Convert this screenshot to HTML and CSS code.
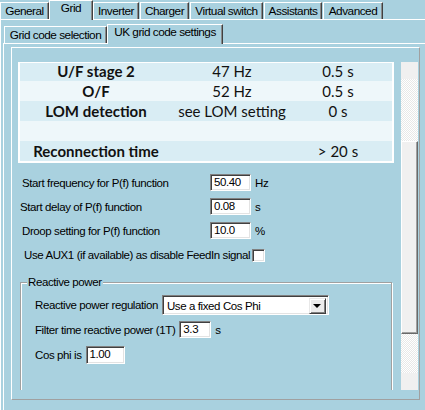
FILE: index.html
```html
<!DOCTYPE html>
<html>
<head>
<meta charset="utf-8">
<link rel="stylesheet" href="styles.css">
</head>
<body>
<div class="window">
  <div class="tabs1">
    <div class="tab t-general">General</div>
    <div class="tab sel t-grid">Grid</div>
    <div class="tab t-inverter">Inverter</div>
    <div class="tab t-charger">Charger</div>
    <div class="tab t-virtual">Virtual switch</div>
    <div class="tab t-assist">Assistants</div>
    <div class="tab t-adv">Advanced</div>
  </div>
  <div class="panel1">
    <div class="tabs2">
      <div class="tab t-gcs">Grid code selection</div>
      <div class="tab sel t-uk">UK grid code settings</div>
    </div>
    <div class="panel2">
      <div class="inner">
        <div class="scroller">
          <div class="content">
            <div class="table">
              <div class="row dark first"><span class="c1">U/F stage 2</span><span class="c2">47 Hz</span><span class="c3">0.5 s</span></div>
              <div class="row light"><span class="c1">O/F</span><span class="c2">52 Hz</span><span class="c3">0.5 s</span></div>
              <div class="row dark"><span class="c1">LOM detection</span><span class="c2">see LOM setting</span><span class="c3">0 s</span></div>
              <div class="row light"><span class="c1"></span><span class="c2"></span><span class="c3"></span></div>
              <div class="row dark"><span class="c1">Reconnection time</span><span class="c2"></span><span class="c3">&gt; 20 s</span></div>
            </div>
            <div class="form">
              <div class="frow"><span class="flabel">Start frequency for P(f) function</span><span class="field w41">50.40</span><span class="unit">Hz</span></div>
              <div class="frow"><span class="flabel alt">Start delay of P(f) function</span><span class="field w41">0.08</span><span class="unit">s</span></div>
              <div class="frow"><span class="flabel">Droop setting for P(f) function</span><span class="field w41">10.0</span><span class="unit">%</span></div>
              <div class="crow"><span class="clabel">Use AUX1 (if available) as disable FeedIn signal</span><span class="check"></span></div>
            </div>
            <div class="group">
              <span class="legend">Reactive power</span>
              <div class="grow r1"><span class="glabel">Reactive power regulation</span><span class="select"><span class="seltext">Use a fixed Cos Phi</span><span class="selbtn"><span class="tri"></span></span></span></div>
              <div class="grow r2"><span class="glabel">Filter time reactive power (1T)</span><span class="field w32">3.3</span><span class="unit">s</span></div>
              <div class="grow r3"><span class="glabel">Cos phi is</span><span class="field w39">1.00</span></div>
            </div>
          </div>
          <div class="scrollbar">
            <div class="sbtn"></div>
            <div class="track t1"></div>
            <div class="thumb"></div>
            <div class="track t2"></div>
            <div class="sbtn"></div>
          </div>
        </div>
      </div>
    </div>
  </div>
</div>
</body>
</html>
```

FILE: styles.css
```css
* { box-sizing: border-box; }
html, body { margin: 0; padding: 0; }
body {
  width: 425px;
  height: 410px;
  overflow: hidden;
  background: #a9d1df;
  font-family: "Liberation Sans", Arial, sans-serif;
  font-size: 11.5px;
  letter-spacing: -0.4px;
  color: #000;
}
.window { width: 425px; height: 410px; overflow: hidden; }

/* tabs */
.tabs1 { display: flex; align-items: flex-end; height: 19px; }
.tab {
  height: 17px;
  border-top: 1px solid #fff;
  border-left: 1px solid #fff;
  border-right: 1px solid #404040;
  box-shadow: inset -1px 0 0 #8a8a8a;
  text-align: center;
  line-height: 15px;
  padding-top: 1px;
  white-space: nowrap;
  background: #a9d1df;
  font-size: 11.8px;
  letter-spacing: -0.5px;
}
.tab.sel {
  position: relative;
  z-index: 1;
  height: 20px;
  margin-bottom: -1px;
  padding-top: 0;
}
.t-general { width: 49px; }
.t-grid { width: 44px; }
.t-inverter { width: 46px; }
.t-charger { width: 49px; margin-left: 1px; }
.t-virtual { width: 73px; margin-left: 1px; }
.t-assist { width: 58px; margin-left: 1px; }
.t-adv { width: 60px; margin-left: 1px; }

.panel1 {
  border-top: 1px solid #fff;
  border-left: 1px solid #fff;
  height: 391px;
}
.tabs2 { display: flex; align-items: flex-end; height: 23px; margin-left: 3px; }
.t-gcs { width: 103px; }
.t-uk { width: 116px; height: 21px; padding-top: 1px; }

.panel2 {
  margin-left: 2px;
  border-top: 1px solid #fff;
  border-left: 1px solid #fff;
  height: 368px;
  padding-top: 3px;
  padding-left: 7px;
}
.inner {
  width: 409px;
  height: 353px;
  border-top: 1px solid #fff;
  border-left: 1px solid #fff;
  border-right: 1px solid #a0a0a0;
  border-bottom: 1px solid #a0a0a0;
  padding-left: 6px;
  padding-top: 14px;
}
.scroller {
  width: 400px;
  height: 328px;
  overflow: hidden;
  display: flex;
}
.content { width: 383px; flex: none; }

/* table */
.table {
  width: 376px;
  border-top: 1px solid #fff;
  border-left: 2px solid #fff;
  border-right: 2px solid #fff;
  border-bottom: 2px solid #fff;
  font-family: Lato, "Open Sans", sans-serif;
  font-size: 15px;
  letter-spacing: 0;
  color: #111;
}
.row { display: flex; height: 20px; line-height: 20px; }
.row.first { height: 18px; line-height: 16px; }
.row.dark { background: #d9edf4; }
.row.light { background: #eef7fa; }
.c1 { width: 152px; text-align: center; font-weight: bold; }
.c2 { width: 120px; text-align: center; }
.c3 { width: 92px; text-align: center; }

/* form */
.form { padding-top: 11px; }
.frow { display: flex; align-items: center; height: 17px; margin-bottom: 7px; }
.flabel { width: 192px; padding-left: 4px; white-space: nowrap; }
.flabel.alt { padding-left: 2px; }
.field {
  height: 17px;
  background: #fff;
  border: 1px solid;
  border-color: #808080 #fff #fff #808080;
  box-shadow: inset 1px 1px 0 #404040, inset -1px -1px 0 #e3e3e3;
  padding-left: 3px;
  line-height: 15px;
  white-space: nowrap;
  flex: none;
}
.w41 { width: 41px; }
.w32 { width: 32px; }
.w39 { width: 39px; }
.unit { margin-left: 4px; }
.crow { display: flex; align-items: center; height: 16px; margin-top: 8px; padding-left: 6px; }
.clabel { white-space: nowrap; }
.check {
  width: 13px;
  height: 13px;
  margin-left: 2px;
  background: #fff;
  border: 1px solid;
  border-color: #808080 #fff #fff #808080;
  box-shadow: inset 1px 1px 0 #404040, inset -1px -1px 0 #e3e3e3;
}

/* group */
.group {
  position: relative;
  margin-top: 19px;
  margin-left: 2px;
  width: 372px;
  height: 120px;
  border: 1px solid #a0a0a0;
  box-shadow: inset 1px 1px 0 #fff, 1px 1px 0 #fff;
  padding-left: 14px;
  padding-top: 12px;
}
.legend {
  position: absolute;
  left: 6px;
  top: -8px;
  padding: 0 1px;
  background: #a9d1df;
  line-height: 15px;
}
.grow { display: flex; align-items: center; }
.glabel { white-space: nowrap; margin-right: 4px; }
.r1 { height: 20px; }
.r2 { height: 17px; margin-top: 6px; }
.r3 { height: 18px; margin-top: 8px; }
.r3 .field { height: 18px; }
.select {
  display: flex;
  width: 167px;
  height: 20px;
  background: #fff;
  border: 1px solid;
  border-color: #808080 #fff #fff #808080;
  box-shadow: inset 1px 1px 0 #404040, inset -1px -1px 0 #e3e3e3;
  padding: 2px 2px 1px 2px;
}
.seltext { flex: 1; padding-left: 2px; line-height: 16px; white-space: nowrap; }
.selbtn {
  width: 17px;
  height: 16px;
  background: #ececec;
  border: 1px solid;
  border-color: #e8e8e8 #404040 #404040 #e8e8e8;
  box-shadow: inset 1px 1px 0 #fff, inset -1px -1px 0 #808080;
  display: flex;
  align-items: center;
  justify-content: center;
}
.tri {
  width: 0;
  height: 0;
  border-left: 4px solid transparent;
  border-right: 4px solid transparent;
  border-top: 4px solid #000;
}

/* scrollbar */
.scrollbar { width: 17px; flex: none; display: flex; flex-direction: column; }
.sbtn { height: 17px; background: #f0f0f0; }
.track {
  background: repeating-conic-gradient(#ffffff 0 25%, #e8e8e8 0 50%) 0 0 / 2px 2px;
}
.t1 { height: 62px; }
.t2 { height: 39px; }
.thumb {
  height: 193px;
  background: #f0f0f0;
  border-top: 1px solid #fff;
  border-left: 1px solid #fff;
  border-right: 1px solid #696969;
  border-bottom: 1px solid #696969;
  box-shadow: inset -1px -1px 0 #a0a0a0;
}
```
